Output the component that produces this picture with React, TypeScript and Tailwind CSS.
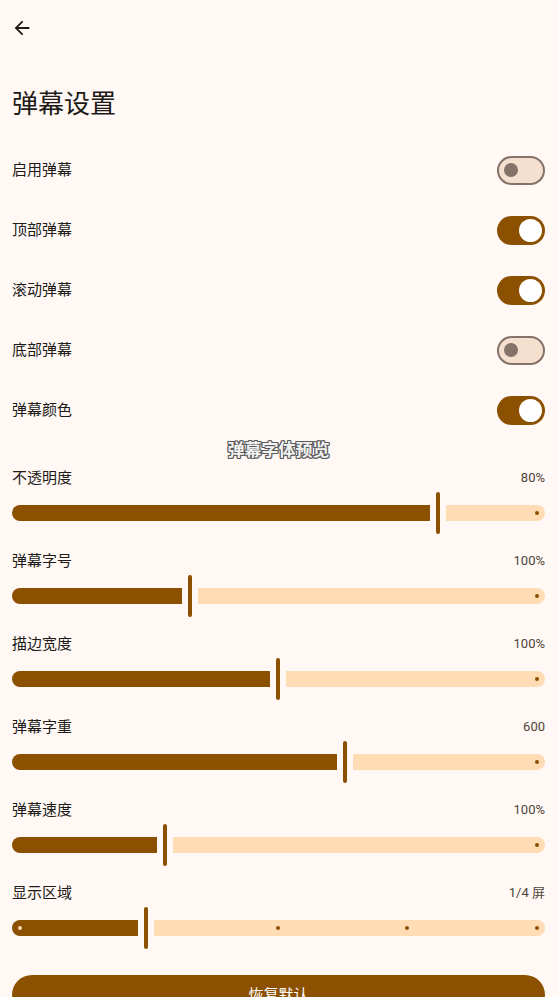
import React from "react";

const font = { fontFamily: 'Roboto, "Noto Sans CJK SC", "Noto Sans", sans-serif' };

function Switch({ on }: { on: boolean }) {
  if (on) {
    return (
      <div className="w-[48px] h-[29px] rounded-full bg-[#8b5000] flex items-center justify-end pr-[3px]">
        <div className="w-[23px] h-[23px] rounded-full bg-white" />
      </div>
    );
  }
  return (
    <div className="w-[48px] h-[29px] rounded-full bg-[#f5e0d0] border-2 border-[#857268] flex items-center pl-[5px]">
      <div className="w-[14px] h-[14px] rounded-full bg-[#857268]" />
    </div>
  );
}

type SliderProps = { label: string; value: string; thumb: number; stops?: number[] };

function Slider({ label, value, thumb, stops }: SliderProps) {
  const activeW = thumb - 12 - 2 - 6;
  return (
    <div className="pb-[16px]">
      <div className="h-5 flex items-center justify-between">
        <span className="text-[15px] text-[#201a17]">{label}</span>
        <span className="text-[13px] text-[#4f4539]">{value}</span>
      </div>
      <div className="relative mt-[3px] h-[44px] flex items-center">
        <div
          className="h-[16px] bg-[#8b5000] rounded-l-full rounded-r-[2px] shrink-0"
          style={{ width: activeW }}
        />
        <div className="w-[4px] h-[42px] rounded-full bg-[#8b5000] mx-[6px] shrink-0" />
        <div className="h-[16px] flex-1 bg-[#ffdcb4] rounded-r-full rounded-l-[2px]" />
        {(stops ?? [537]).map((x) => (
          <div
            key={x}
            className={`absolute top-[20px] w-[4px] h-[4px] rounded-full ${x < thumb ? "bg-[#ffdcb4]" : "bg-[#8b5000]"}`}
            style={{ left: x - 12 - 2 }}
          />
        ))}
      </div>
    </div>
  );
}

export default function App() {
  const toggles: [string, boolean][] = [
    ["启用弹幕", false],
    ["顶部弹幕", true],
    ["滚动弹幕", true],
    ["底部弹幕", false],
    ["弹幕颜色", true],
  ];
  const sliders: SliderProps[] = [
    { label: "不透明度", value: "80%", thumb: 438 },
    { label: "弹幕字号", value: "100%", thumb: 190 },
    { label: "描边宽度", value: "100%", thumb: 278 },
    { label: "弹幕字重", value: "600", thumb: 345 },
    { label: "弹幕速度", value: "100%", thumb: 165 },
    { label: "显示区域", value: "1/4 屏", thumb: 146, stops: [20, 278, 407, 537] },
  ];
  return (
    <div className="min-h-[997px] bg-[#fff8f5] text-[#201a17] overflow-hidden" style={font}>
      <div className="h-14 flex items-center pl-[11px]">
        <svg width="22" height="22" viewBox="0 0 24 24" fill="#201a17">
          <path d="M20 11H7.83l5.59-5.59L12 4l-8 8 8 8 1.41-1.41L7.83 13H20v-2z" />
        </svg>
      </div>
      <div className="pl-3 pr-[14px]">
        <h1 className="mt-[30px] text-[26px] leading-[36px] font-normal">弹幕设置</h1>
        <div className="mt-[18px]">
          {toggles.map(([label, on]) => (
            <div key={label} className="h-[60px] flex items-center justify-between">
              <span className="text-[15px]">{label}</span>
              <Switch on={on} />
            </div>
          ))}
        </div>
        <div className="h-[22px] flex items-center justify-center">
          <span className="text-[17px] font-bold text-[#f2f2f2] [text-shadow:-1px_-1px_0_#5a5a5a,1px_-1px_0_#5a5a5a,-1px_1px_0_#5a5a5a,1px_1px_0_#5a5a5a,0_1px_0_#5a5a5a,0_-1px_0_#5a5a5a,1px_0_0_#5a5a5a,-1px_0_0_#5a5a5a]">
            弹幕字体预览
          </span>
        </div>
        <div className="mt-[6px]">
          {sliders.map((s) => (
            <Slider key={s.label} {...s} />
          ))}
        </div>
        <button className="mt-[9px] w-full h-10 rounded-full bg-[#8b5000] text-white text-[15px]">
          恢复默认
        </button>
      </div>
    </div>
  );
}
